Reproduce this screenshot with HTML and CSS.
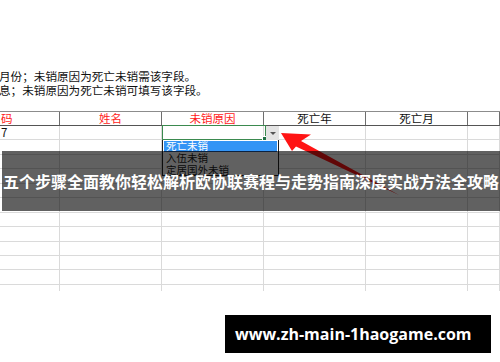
FILE: index.html
```html
<!DOCTYPE html>
<html lang="zh">
<head>
<meta charset="utf-8">
<title>sheet</title>
<link rel="stylesheet" href="styles.css">
</head>
<body>
<div class="page">
  <div class="notes">
    <div class="note n1">月份；未销原因为死亡未销需该字段。</div>
    <div class="note n2">息；未销原因为死亡未销可填写该字段。</div>
  </div>
  <div class="sheet">
    <div class="row head">
      <div class="cell left red">码</div>
      <div class="cell red">姓名</div>
      <div class="cell red">未销原因</div>
      <div class="cell">死亡年</div>
      <div class="cell">死亡月</div>
      <div class="cell"></div>
    </div>
    <div class="row"><div class="cell left">7</div><div class="cell"></div><div class="cell"></div><div class="cell"></div><div class="cell"></div><div class="cell"></div></div>
    <div class="row"><div class="cell"></div><div class="cell"></div><div class="cell"></div><div class="cell"></div><div class="cell"></div><div class="cell"></div></div>
    <div class="row"><div class="cell"></div><div class="cell"></div><div class="cell"></div><div class="cell"></div><div class="cell"></div><div class="cell"></div></div>
    <div class="row"><div class="cell"></div><div class="cell"></div><div class="cell"></div><div class="cell"></div><div class="cell"></div><div class="cell"></div></div>
    <div class="row"><div class="cell"></div><div class="cell"></div><div class="cell"></div><div class="cell"></div><div class="cell"></div><div class="cell"></div></div>
    <div class="row"><div class="cell"></div><div class="cell"></div><div class="cell"></div><div class="cell"></div><div class="cell"></div><div class="cell"></div></div>
    <div class="row"><div class="cell"></div><div class="cell"></div><div class="cell"></div><div class="cell"></div><div class="cell"></div><div class="cell"></div></div>
    <div class="row"><div class="cell"></div><div class="cell"></div><div class="cell"></div><div class="cell"></div><div class="cell"></div><div class="cell"></div></div>
    <div class="row"><div class="cell"></div><div class="cell"></div><div class="cell"></div><div class="cell"></div><div class="cell"></div><div class="cell"></div></div>
    <div class="row"><div class="cell"></div><div class="cell"></div><div class="cell"></div><div class="cell"></div><div class="cell"></div><div class="cell"></div></div>
    <div class="row"><div class="cell"></div><div class="cell"></div><div class="cell"></div><div class="cell"></div><div class="cell"></div><div class="cell"></div></div>
    <div class="row"><div class="cell"></div><div class="cell"></div><div class="cell"></div><div class="cell"></div><div class="cell"></div><div class="cell"></div></div>
  </div>

  <div class="active-cell"><span class="handle"></span></div>
  <div class="dd-btn"><span class="tri"></span></div>
  <div class="dd-list">
    <div class="dd-item sel">死亡未销</div>
    <div class="dd-item">入伍未销</div>
    <div class="dd-item">定居国外未销</div>
  </div>

  <svg class="arrow" width="500" height="362" viewBox="0 0 500 362">
    <polygon points="281,133 311,134.5 301,141 399,195 296,146.5 292,151" fill="#ff1414"/>
  </svg>

  <div class="banner"><span class="title">五个步骤全面教你轻松解析欧协联赛程与走势指南深度实战方法全攻略</span></div>
  <div class="url">www.zh-main-1haogame.com</div>
</div>
</body>
</html>
```

FILE: styles.css
```css
html, body {
  margin: 0;
  padding: 0;
  background: #fff;
}
.page {
  position: relative;
  width: 500px;
  height: 362px;
  overflow: hidden;
  font-family: "Noto Sans CJK SC", "Noto Sans", sans-serif;
  color: #111;
}
.notes {
  padding-top: 70px;
  height: 111px;
  box-sizing: border-box;
}
.note {
  font-size: 11.6px;
  line-height: 13.5px;
  white-space: nowrap;
}
.n1 { margin-left: -1px; }
.n2 { margin-left: -1px; }

.sheet {
  height: 180px;
  overflow: hidden;
}
.row {
  display: grid;
  grid-template-columns: 60px 102px 102px 102px 102px 32px;
  height: 14.45px;
  box-sizing: border-box;
  border-bottom: 1px solid #dadada;
}
.cell {
  border-right: 1px solid #dadada;
  font-size: 11.5px;
  line-height: 13px;
  text-align: center;
  white-space: nowrap;
}
.cell.left {
  text-align: left;
  padding-left: 1px;
}
.row.head {
  height: 15px;
  border-top: 1px solid #8c8c8c;
  border-bottom: 1px solid #555;
}
.row.head .cell {
  border-right: 1px solid #6e6e6e;
}
.red { color: #ff1a1a; }

.active-cell {
  position: absolute;
  left: 162px;
  top: 125px;
  width: 104px;
  height: 15px;
  box-sizing: border-box;
  border: 1px solid #3b8a4f;
}
.handle {
  position: absolute;
  right: -3px;
  bottom: -3px;
  width: 4px;
  height: 4px;
  background: #217346;
  border: 1px solid #fff;
}
.dd-btn {
  position: absolute;
  left: 266px;
  top: 126px;
  width: 13px;
  height: 14px;
  background: #e4e4e4;
  display: flex;
  align-items: center;
  justify-content: center;
}
.tri {
  width: 0;
  height: 0;
  border-left: 3px solid transparent;
  border-right: 3px solid transparent;
  border-top: 3px solid #555;
}
.dd-list {
  position: absolute;
  left: 162px;
  top: 140px;
  width: 117px;
  height: 36px;
  box-sizing: border-box;
  background: #fff;
  border: 1px solid #222;
  border-top: none;
  padding: 1px 1px 0 1px;
}
.dd-item {
  font-size: 10.5px;
  line-height: 11.5px;
  height: 11.5px;
  padding-left: 2px;
  color: #222;
  white-space: nowrap;
}
.dd-item.sel {
  background: #3394f5;
  color: #fff;
  border-bottom: 1px solid #1e5aa8;
  height: 10px;
  line-height: 10px;
}
.arrow {
  position: absolute;
  left: 0;
  top: 0;
  pointer-events: none;
}
.banner {
  position: absolute;
  left: 2px;
  right: 0;
  top: 151px;
  height: 60px;
  background: rgba(0, 0, 0, 0.62);
  display: flex;
  align-items: center;
  justify-content: center;
}
.title {
  color: #fff;
  font-weight: bold;
  font-size: 16px;
  white-space: nowrap;
  line-height: 20px;
}
.url {
  position: absolute;
  left: 225px;
  top: 315px;
  width: 266px;
  height: 38px;
  box-sizing: border-box;
  background: #000;
  color: #fff;
  font-family: "Open Sans", "Noto Sans", sans-serif;
  font-weight: bold;
  font-size: 16px;
  line-height: 38px;
  padding-left: 10px;
  white-space: nowrap;
}
```
